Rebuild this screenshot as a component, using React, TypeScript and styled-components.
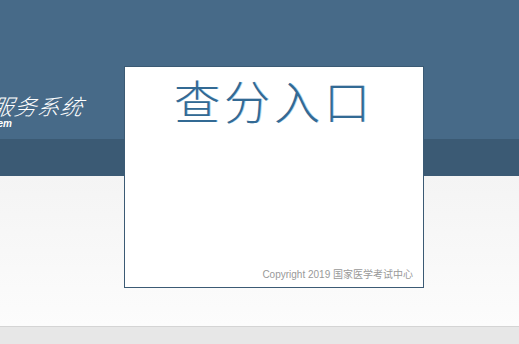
import styled, { createGlobalStyle } from "styled-components";

const GlobalStyle = createGlobalStyle`
html, body {
margin: 0;
padding: 0;
}
body {
font-family: "Liberation Sans", "Noto Sans CJK SC", sans-serif;
}
`;

const Page = styled.div`
position: relative;
display: flex;
flex-direction: column;
width: 100%;
height: 344px;
overflow: hidden;
`;

const Header = styled.header`
display: flex;
align-items: flex-start;
height: 139px;
background: #476a88;
`;

// logo text runs off the left edge, like the wider original page
const Logo = styled.div`
display: flex;
flex-direction: column;
align-items: flex-end;
width: 84px;
margin-top: 92px;
color: #ffffff;
white-space: nowrap;
`;

const LogoTitle = styled.div`
font-family: "Noto Sans CJK SC", sans-serif;
font-size: 22px;
font-style: italic;
font-weight: 300;
line-height: 26px;
letter-spacing: 1px;
transform: skewX(-10deg);
`;

const LogoSub = styled.div`
font-family: "Liberation Sans", sans-serif;
font-size: 10px;
font-style: italic;
font-weight: bold;
line-height: 12px;
margin-right: 72px;
`;

const NavBar = styled.nav`
height: 37px;
background: #3b5a74;
`;

const Main = styled.main`
height: 150px;
background: linear-gradient(#f4f4f4, #fcfcfc);
border-bottom: 1px solid #d4d4d4;
`;

const Footer = styled.footer`
flex: 1;
background: #e7e7e7;
`;

const Panel = styled.section`
position: absolute;
left: 124px;
top: 66px;
width: 298px;
height: 220px;
display: flex;
flex-direction: column;
align-items: center;
background: #ffffff;
border: 1px solid #3b5a74;
`;

const PanelTitle = styled.h1`
margin: 5px 0 0 0;
font-family: "Noto Sans CJK SC", serif;
font-size: 46px;
font-weight: 300;
line-height: 54px;
letter-spacing: 4px;
color: #336a94;
text-shadow: 1px 0 0 rgba(150, 190, 220, 0.6);
`;

const Copyright = styled.div`
margin-top: auto;
align-self: flex-end;
padding: 0 10px 6px 0;
font-size: 10px;
color: #999999;
`;

export default function App() {
  return (
    <>
      <GlobalStyle />
      <Page>
        <Header>
          <Logo>
            <LogoTitle>国家医学考试网上服务系统</LogoTitle>
            <LogoSub>Online Service System</LogoSub>
          </Logo>
        </Header>
        <NavBar />
        <Main />
        <Footer />
        <Panel>
          <PanelTitle>查分入口</PanelTitle>
          <Copyright>Copyright 2019 国家医学考试中心</Copyright>
        </Panel>
      </Page>
    </>
  );
}
